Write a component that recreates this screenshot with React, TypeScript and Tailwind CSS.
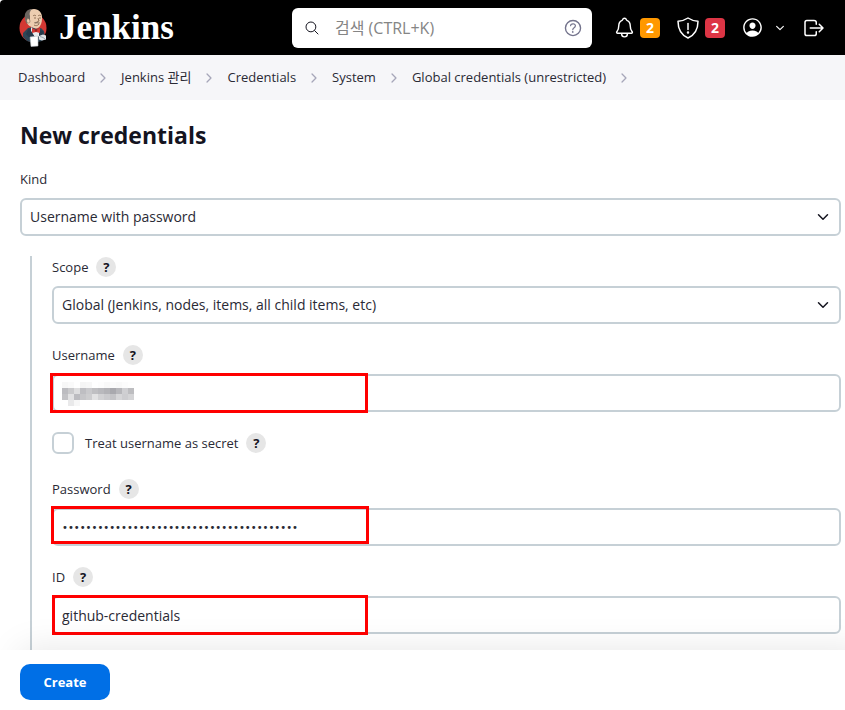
import { useState } from "react";
import type { ReactNode } from "react";
import {
    IoChevronDown,
    IoChevronForward,
    IoHelpCircleOutline,
    IoLogOutOutline,
    IoNotificationsOutline,
    IoPersonCircleOutline,
    IoSearchOutline,
} from "react-icons/io5";

const crumbs = ["Dashboard", "Jenkins 관리", "Credentials", "System", "Global credentials (unrestricted)"];

// Grey levels of the masked username, one row per line of blocks
const mask = [
    ["#f7f7f7", "#fafafa", "#ffffff", "#f5f5f5", "#f7f7f7", "#ffffff", "#fdfdfd", "#f9f9f9", "#fbfbfb", "#f9f9f9", "#fcfcfc", "#fefefe"],
    ["#bcbcc0", "#cacacc", "#dededf", "#bebec2", "#c9c9cc", "#bfbfc2", "#b9b9bd", "#b3b3b7", "#a9a9ae", "#b7b7bb", "#cfcfd2", "#bdbdc0"],
    ["#c3c3c6", "#e2e2e3", "#bcbcc0", "#c6c6c9", "#cdcdcf", "#e2e2e3", "#d2d2d4", "#cbcbce", "#c4c4c7", "#d6d6d8", "#cdcdd0", "#d4d4d6"],
    ["#ffffff", "#e9e9ea", "#f7f7f7", "#ffffff", "#ffffff", "#ffffff", "#ffffff", "#ffffff", "#ffffff", "#ffffff", "#ffffff", "#ffffff"],
];

const inputClass =
    "block h-[38px] w-full rounded-md border-2 border-[#c6d0d6] bg-white px-2 text-[#2a2a35] outline-none focus:border-[#006fe6]";

function ButlerLogo() {
    return (
        <svg viewBox="0 0 28 39" className="h-[39px] w-7" aria-hidden="true">
            <ellipse cx="14" cy="20" rx="13.5" ry="14" fill="#d33833" />
            <path d="M4 25l5-5 5-1 4 2 4-1 3 3 1 6-3 4-9 2-6-2-4-4z" fill="#2f4656" />
            <path d="M12 19l4 4 4-1v6l-3 3-5-8z" fill="#e9ecee" />
            <path d="M10 20l7 11-3 3-7-8z" fill="#26394a" />
            <path d="M20 22l4 1 1 5-5 1z" fill="#26394a" />
            <path d="M6 10C6 4 10 1 15 1c5 0 8 4 8 8 0 3 0 6-2 9-1 2-4 3-6 2-4-1-8-4-9-10z" fill="#edcdb0" />
            <path d="M13 1C8 1 5 5 6 10c0 3 1 4 2 6l1-4 2 1V8c-1-3 0-5 2-7z" fill="#6b6560" />
            <path d="M8 11c1-1 3 0 3 2s-1 2-2 2-2-2-1-4z" fill="#edcdb0" stroke="#6d5a49" strokeWidth=".5" />
            <path d="M14 8c1-1 2-1 3 0M19 8c1-1 2-1 3 0M15 10h2M20 10h2M19 10l1 3-2 1M15 17c2 1 3 1 5-1" fill="none" stroke="#6d4c33" strokeWidth=".7" />
            <path d="M15 14.500c2 0 2-1 3-.500s2 .500 3 .500c0 1.500-2 1.500-3 .500-1 1-3 .500-3-.500z" fill="#8a7462" />
            <path d="M13 20l4 2 4-2v5l-4-1-4 1z" fill="#d33833" />
            <circle cx="17" cy="22.500" r="1.200" fill="#9b2320" />
            <path d="M11 29l8-1v10l-7 .500z" fill="#fff" stroke="#b8bfc4" strokeWidth=".6" />
            <path d="M20 28l4-1.500 3 1v4l-4 1-3-1z" fill="#dfe3e6" />
            <path d="M21 28.500l3 1 2 1.500" fill="none" stroke="#7d8a92" strokeWidth=".7" />
        </svg>
    );
}

function ShieldIcon() {
    return (
        <svg viewBox="0 0 22 22" className="size-[22px]" fill="none" stroke="currentColor" strokeWidth="1.5" strokeLinejoin="round" strokeLinecap="round" aria-hidden="true">
            <path d="M11 1C8 3 4.500 4 1 4.300 1 11 3 17.500 11 21c8-3.500 10-10 10-16.700C17.500 4 14 3 11 1z" />
            <path d="M11 6.500v6" />
            <circle cx="11" cy="15.500" r=".5" fill="currentColor" />
        </svg>
    );
}

function HelpButton({ topic }: { topic: string }) {
    return (
        <button
            type="button"
            aria-label={`Help for feature: ${topic}`}
            className="flex size-5 items-center justify-center rounded-full bg-[#e6e6e6] text-[13px] font-bold text-[#14141f]"
        >
            ?
        </button>
    );
}

function Field({ id, label, children }: { id: string; label: string; children: ReactNode }) {
    return (
        <div>
            <div className="mb-2 flex h-[22px] items-center gap-2">
                <label htmlFor={id} className="text-[13px]">{label}</label>
                <HelpButton topic={label} />
            </div>
            <div className="relative">{children}</div>
        </div>
    );
}

function Select({ id, option }: { id: string; option: string }) {
    return (
        <div className="relative">
            <select id={id} className={`${inputClass} appearance-none pr-10 text-sm`}>
                <option>{option}</option>
            </select>
            <IoChevronDown className="pointer-events-none absolute top-[11px] right-2.5 size-4 text-[#14141f]" />
        </div>
    );
}

export default function App() {
    const [username, setUsername] = useState("");
    const [password, setPassword] = useState("x".repeat(40));
    const [credentialId, setCredentialId] = useState("github-credentials");

    return (
        <div className="flex min-h-screen flex-col bg-white font-['Open_Sans','Noto_Sans_CJK_KR',sans-serif] text-sm text-[#2a2a35]">
            <header className="flex h-[55px] items-center rounded-tl bg-black px-[19px] text-white">
                <a href="#" className="flex items-center gap-3">
                    <ButlerLogo />
                    <span className="font-['Liberation_Serif',serif] text-[35px] leading-10 font-bold">Jenkins</span>
                </a>
                <div className="ml-auto flex h-10 w-[300px] items-center rounded-md bg-white px-3 text-[#14141f]">
                    <IoSearchOutline className="size-4 shrink-0" />
                    <input
                        type="search"
                        aria-label="검색"
                        placeholder="검색 (CTRL+K)"
                        className="ml-[15px] min-w-0 flex-1 text-base outline-none placeholder:text-[#858585]"
                    />
                    <a href="#" aria-label="Search help" className="text-[#73738c]">
                        <IoHelpCircleOutline className="-mr-1 size-[22px]" />
                    </a>
                </div>
                <a href="#" aria-label="Notifications" className="ml-[21px] flex items-center gap-1">
                    <IoNotificationsOutline className="size-[23px]" />
                    <span className="flex size-5 items-center justify-center rounded bg-[#ff9800] font-bold">2</span>
                </a>
                <a href="#" aria-label="Security warnings" className="ml-[17px] flex items-center gap-1.5">
                    <ShieldIcon />
                    <span className="flex size-5 items-center justify-center rounded bg-[#dc3545] font-bold">2</span>
                </a>
                <a href="#" aria-label="User" className="ml-4">
                    <IoPersonCircleOutline className="size-[23px]" />
                </a>
                <button type="button" aria-label="User menu" className="ml-2.5">
                    <IoChevronDown className="size-3" />
                </button>
                <a href="#" aria-label="Log out" className="ml-4">
                    <IoLogOutOutline className="size-6" />
                </a>
            </header>

            <nav aria-label="Breadcrumb" className="bg-[#f6f6f9] px-[18px]">
                <ol className="flex h-[45px] items-center text-[13px]">
                    {crumbs.map((crumb) => (
                        <li key={crumb} className="flex items-center whitespace-nowrap">
                            <a href="#">{crumb}</a>
                            <IoChevronForward className="mx-[11px] size-3.5 text-[#a6a6b9]" />
                        </li>
                    ))}
                </ol>
            </nav>

            <form className="flex flex-1 flex-col" onSubmit={(e) => e.preventDefault()}>
                <main className="flex flex-1 flex-col pr-1 pl-5">
                    <h1 className="mt-5 text-[23px] leading-[30px] font-bold text-[#14141f]">New credentials</h1>
                    <div className="mt-[18px] mb-5">
                        <label htmlFor="kind" className="mb-2 flex h-[22px] items-center text-[13px]">Kind</label>
                        <Select id="kind" option="Username with password" />
                    </div>

                    <div className="ml-2.5 flex flex-1 flex-col gap-5 border-l-2 border-[#c6d0d6] pb-4 pl-5">
                        <Field id="scope" label="Scope">
                            <Select id="scope" option="Global (Jenkins, nodes, items, all child items, etc)" />
                        </Field>

                        <Field id="username" label="Username">
                            <input
                                id="username"
                                value={username}
                                onChange={(e) => setUsername(e.target.value)}
                                className={`${inputClass} text-sm`}
                            />
                            <svg viewBox="0 0 72 24" className="pointer-events-none absolute top-2 left-2.5 h-6 w-[72px]" shapeRendering="crispEdges" aria-hidden="true">
                                {mask.map((row, y) =>
                                    row.map((fill, x) => <rect key={`${x}-${y}`} x={x * 6} y={y * 6} width="6" height="6" fill={fill} />)
                                )}
                            </svg>
                            <div className="pointer-events-none absolute -inset-y-px -left-0.5 w-[318px] border-3 border-[#ff0000]" />
                        </Field>

                        <div className="mb-1 flex h-[22px] items-center">
                            <input
                                id="secret"
                                type="checkbox"
                                className="size-[22px] appearance-none rounded-md border-2 border-[#c6d0d6] bg-white checked:bg-[#006fe6]"
                            />
                            <label htmlFor="secret" className="mr-2 ml-[11px] text-[13px]">Treat username as secret</label>
                            <HelpButton topic="Treat username as secret" />
                        </div>

                        <Field id="password" label="Password">
                            <input
                                id="password"
                                type="password"
                                value={password}
                                onChange={(e) => setPassword(e.target.value)}
                                className={`${inputClass} font-['DejaVu_Sans',sans-serif] text-[10px]`}
                            />
                            <div className="pointer-events-none absolute -top-0.5 -left-px h-[38px] w-[318px] border-3 border-[#ff0000]" />
                        </Field>

                        <Field id="credential-id" label="ID">
                            <input
                                id="credential-id"
                                value={credentialId}
                                onChange={(e) => setCredentialId(e.target.value)}
                                className={`${inputClass} text-sm`}
                            />
                            <div className="pointer-events-none absolute -inset-y-px left-0 w-[316px] border-3 border-[#ff0000]" />
                        </Field>
                    </div>
                </main>

                <footer className="sticky bottom-0 bg-white px-5 pt-3.5 pb-2.5 shadow-[20px_0_36px_rgba(0,0,0,0.1)]">
                    <button type="submit" className="h-9 w-[90px] rounded-[10px] bg-[#006fe6] text-[13px] font-bold text-white">
                        Create
                    </button>
                </footer>
            </form>
        </div>
    );
}
